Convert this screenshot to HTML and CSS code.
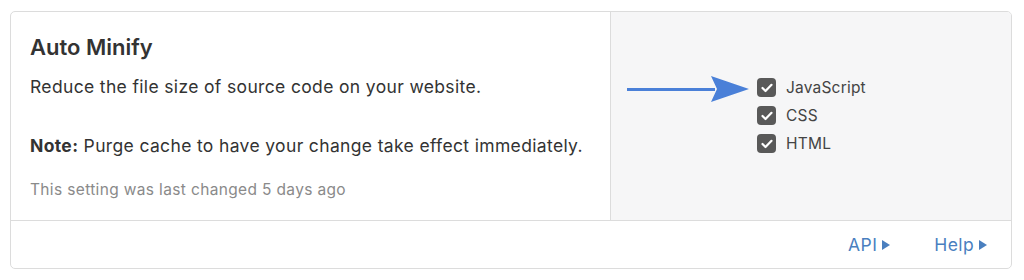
FILE: index.html
```html
<!DOCTYPE html>
<html lang="en">
<head>
    <meta charset="UTF-8">
    <title>Auto Minify</title>
    <link rel="stylesheet" href="styles.css">
</head>
<body>

<div class="card">
    <div class="card-body">
        <div class="card-info">
            <h3>Auto Minify</h3>
            <p>Reduce the file size of source code on your website.</p>
            <p class="note"><strong>Note:</strong> Purge cache to have your change take effect immediately.</p>
            <p class="changed">This setting was last changed 5 days ago</p>
        </div>
        <div class="card-control">
            <svg class="arrow" width="124" height="30" viewBox="0 0 124 30">
                <path d="M0 15.5 H88" stroke="#4a80d8" stroke-width="3"/>
                <path d="M84 2 L122 15 L84 28 L90 15 Z" fill="#4a80d8"/>
            </svg>
            <div class="options">
                <label class="option"><span class="box"><svg width="12" height="10" viewBox="0 0 12 10"><path d="M1.5 5 L4.5 8 L10.5 1.8" fill="none" stroke="#fff" stroke-width="2.2" stroke-linecap="round" stroke-linejoin="round"/></svg></span>JavaScript</label>
                <label class="option"><span class="box"><svg width="12" height="10" viewBox="0 0 12 10"><path d="M1.5 5 L4.5 8 L10.5 1.8" fill="none" stroke="#fff" stroke-width="2.2" stroke-linecap="round" stroke-linejoin="round"/></svg></span>CSS</label>
                <label class="option"><span class="box"><svg width="12" height="10" viewBox="0 0 12 10"><path d="M1.5 5 L4.5 8 L10.5 1.8" fill="none" stroke="#fff" stroke-width="2.2" stroke-linecap="round" stroke-linejoin="round"/></svg></span>HTML</label>
            </div>
        </div>
    </div>
    <div class="card-footer">
        <a href="#">API <span class="tri"></span></a>
        <a href="#">Help <span class="tri"></span></a>
    </div>
</div>

</body>
</html>
```

FILE: styles.css
```css
body {
    font-family: Inter, 'Liberation Sans', sans-serif;
    background-color: #ffffff;
    color: #333333;
    margin: 0;
    padding: 11px 12px 0 10px;
}
.card {
    border: 1px solid #dcdcdc;
    border-radius: 5px;
    height: 256px;
    display: flex;
    flex-direction: column;
    overflow: hidden;
}
.card-body {
    display: flex;
    height: 208px;
    border-bottom: 1px solid #dcdcdc;
}
.card-info {
    width: 580px;
    padding: 22px 0 0 19px;
    border-right: 1px solid #dcdcdc;
}
.card-info h3 {
    font-size: 22px;
    font-weight: 600;
    margin: 0 0 16px 0;
    color: #333;
}
.card-info p {
    font-size: 17.5px;
    letter-spacing: 0.35px;
    line-height: 22px;
    margin: 0;
    color: #333;
}
.card-info .note {
    margin-top: 37px;
}
.card-info .changed {
    margin-top: 22px;
    font-size: 15.5px;
    color: #8a8a8a;
}
.card-control {
    flex: 1;
    background-color: #f6f6f7;
    display: flex;
    align-items: flex-start;
    padding: 62px 0 0 16px;
}
.arrow {
    margin-right: 6px;
}
.options {
    display: flex;
    flex-direction: column;
    gap: 9px;
    padding-top: 4px;
}
.option {
    display: flex;
    align-items: center;
    font-size: 15.5px;
    letter-spacing: 0.2px;
    color: #444;
    height: 19px;
}
.box {
    width: 19px;
    height: 19px;
    border-radius: 4px;
    background-color: #595959;
    display: flex;
    align-items: center;
    justify-content: center;
    margin-right: 10px;
}
.card-footer {
    flex: 1;
    display: flex;
    justify-content: flex-end;
    align-items: center;
    gap: 44px;
    padding-right: 24px;
}
.card-footer a {
    color: #4a7fbf;
    text-decoration: none;
    font-size: 17.5px;
    letter-spacing: 0.4px;
    display: flex;
    align-items: center;
}
.tri {
    width: 0;
    height: 0;
    border-top: 5.5px solid transparent;
    border-bottom: 5.5px solid transparent;
    border-left: 8px solid #4a7fbf;
    margin-left: 5px;
}
```
